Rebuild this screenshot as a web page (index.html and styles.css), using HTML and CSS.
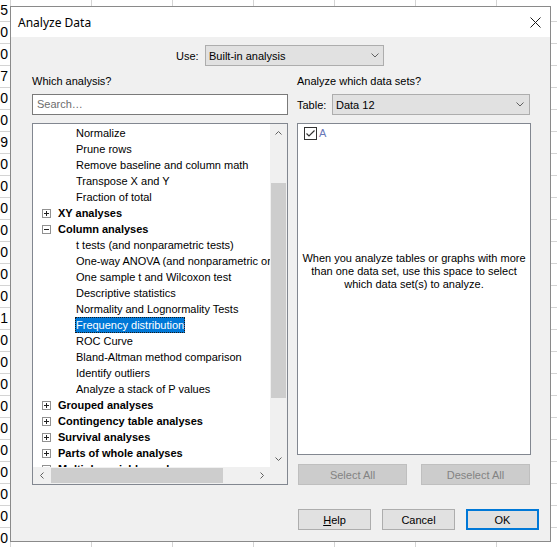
FILE: index.html
```html
<!DOCTYPE html>
<html lang="en">

<head>
    <meta charset="UTF-8">
    <title>Analyze Data</title>
    <link rel="stylesheet" href="styles.css">
</head>

<body>
    <div class="sheet">
        <div class="sheet-row"><div class="row-head">5</div><div class="row-cells"></div></div>
        <div class="sheet-row"><div class="row-head">0</div><div class="row-cells"></div></div>
        <div class="sheet-row"><div class="row-head">0</div><div class="row-cells"></div></div>
        <div class="sheet-row"><div class="row-head">7</div><div class="row-cells"></div></div>
        <div class="sheet-row"><div class="row-head">0</div><div class="row-cells"></div></div>
        <div class="sheet-row"><div class="row-head">0</div><div class="row-cells"></div></div>
        <div class="sheet-row"><div class="row-head">9</div><div class="row-cells"></div></div>
        <div class="sheet-row"><div class="row-head">0</div><div class="row-cells"></div></div>
        <div class="sheet-row"><div class="row-head">0</div><div class="row-cells"></div></div>
        <div class="sheet-row"><div class="row-head">0</div><div class="row-cells"></div></div>
        <div class="sheet-row"><div class="row-head">0</div><div class="row-cells"></div></div>
        <div class="sheet-row"><div class="row-head">0</div><div class="row-cells"></div></div>
        <div class="sheet-row"><div class="row-head">0</div><div class="row-cells"></div></div>
        <div class="sheet-row"><div class="row-head">0</div><div class="row-cells"></div></div>
        <div class="sheet-row"><div class="row-head">1</div><div class="row-cells"></div></div>
        <div class="sheet-row"><div class="row-head">0</div><div class="row-cells"></div></div>
        <div class="sheet-row"><div class="row-head">0</div><div class="row-cells"></div></div>
        <div class="sheet-row"><div class="row-head">0</div><div class="row-cells"></div></div>
        <div class="sheet-row"><div class="row-head">0</div><div class="row-cells"></div></div>
        <div class="sheet-row"><div class="row-head">0</div><div class="row-cells"></div></div>
        <div class="sheet-row"><div class="row-head">0</div><div class="row-cells"></div></div>
        <div class="sheet-row"><div class="row-head">0</div><div class="row-cells"></div></div>
        <div class="sheet-row"><div class="row-head">0</div><div class="row-cells"></div></div>
        <div class="sheet-row"><div class="row-head">0</div><div class="row-cells"></div></div>
        <div class="sheet-row"><div class="row-head">0</div><div class="row-cells"></div></div>
    </div>

    <div class="dialog">
        <div class="titlebar">
            <span class="title">Analyze Data</span>
            <svg class="close" width="11" height="11" viewBox="0 0 11 11">
                <path d="M0.5 0.5 L10.5 10.5 M10.5 0.5 L0.5 10.5" stroke="#1a1a1a" stroke-width="1" fill="none"/>
            </svg>
        </div>

        <div class="dialog-body">
            <div class="use-row">
                <span class="use-label">Use:</span>
                <div class="dropdown use-select">
                    <span>Built-in analysis</span>
                    <svg class="chevron" width="8" height="5" viewBox="0 0 8 5"><polyline points="0.5,0.5 4,4 7.5,0.5" fill="none" stroke="#606060"/></svg>
                </div>
            </div>

            <div class="columns">
                <div class="col-left">
                    <div class="label">Which analysis?</div>
                    <div class="search">Search…</div>
                    <div class="tree">
                        <div class="tree-rows">
                            <div class="node leaf"><span>Normalize</span></div>
                            <div class="node leaf"><span>Prune rows</span></div>
                            <div class="node leaf"><span>Remove baseline and column math</span></div>
                            <div class="node leaf"><span>Transpose X and Y</span></div>
                            <div class="node leaf"><span>Fraction of total</span></div>
                            <div class="node group"><i class="expander plus"></i>XY analyses</div>
                            <div class="node group"><i class="expander"></i>Column analyses</div>
                            <div class="node leaf"><span>t tests (and nonparametric tests)</span></div>
                            <div class="node leaf"><span>One-way ANOVA (and nonparametric or mixed)</span></div>
                            <div class="node leaf"><span>One sample t and Wilcoxon test</span></div>
                            <div class="node leaf"><span>Descriptive statistics</span></div>
                            <div class="node leaf"><span>Normality and Lognormality Tests</span></div>
                            <div class="node leaf"><span class="selected">Frequency distribution</span></div>
                            <div class="node leaf"><span>ROC Curve</span></div>
                            <div class="node leaf"><span>Bland-Altman method comparison</span></div>
                            <div class="node leaf"><span>Identify outliers</span></div>
                            <div class="node leaf"><span>Analyze a stack of P values</span></div>
                            <div class="node group"><i class="expander plus"></i>Grouped analyses</div>
                            <div class="node group"><i class="expander plus"></i>Contingency table analyses</div>
                            <div class="node group"><i class="expander plus"></i>Survival analyses</div>
                            <div class="node group"><i class="expander plus"></i>Parts of whole analyses</div>
                            <div class="node group"><i class="expander plus"></i>Multiple variable analyses</div>
                        </div>
                        <div class="vbar">
                            <div class="sb-btn">
                                <svg width="7" height="4" viewBox="0 0 7 4"><polyline points="0.5,3.5 3.5,0.5 6.5,3.5" fill="none" stroke="#606060"/></svg>
                            </div>
                            <div class="vtrack"><div class="vthumb"></div></div>
                            <div class="sb-btn">
                                <svg width="7" height="4" viewBox="0 0 7 4"><polyline points="0.5,0.5 3.5,3.5 6.5,0.5" fill="none" stroke="#606060"/></svg>
                            </div>
                        </div>
                        <div class="hbar">
                            <div class="sb-btn">
                                <svg width="4" height="7" viewBox="0 0 4 7"><polyline points="3.5,0.5 0.5,3.5 3.5,6.5" fill="none" stroke="#606060"/></svg>
                            </div>
                            <div class="htrack"><div class="hthumb"></div></div>
                            <div class="sb-btn">
                                <svg width="4" height="7" viewBox="0 0 4 7"><polyline points="0.5,0.5 3.5,3.5 0.5,6.5" fill="none" stroke="#606060"/></svg>
                            </div>
                        </div>
                        <div class="corner"></div>
                    </div>
                </div>

                <div class="col-right">
                    <div class="label">Analyze which data sets?</div>
                    <div class="table-row">
                        <span class="table-label">Table:</span>
                        <div class="dropdown table-select">
                            <span>Data 12</span>
                            <svg class="chevron" width="8" height="5" viewBox="0 0 8 5"><polyline points="0.5,0.5 4,4 7.5,0.5" fill="none" stroke="#606060"/></svg>
                        </div>
                    </div>
                    <div class="dataset-box">
                        <div class="dataset">
                            <span class="checkbox">
                                <svg width="11" height="11" viewBox="0 0 11 11"><polyline points="1.5,5.5 4,8 9.5,2.5" fill="none" stroke="#333" stroke-width="1.2"/></svg>
                            </span>
                            <span class="dataset-name">A</span>
                        </div>
                        <p class="hint">When you analyze tables or graphs with more than one data set, use this space to select which data set(s) to analyze.</p>
                    </div>
                    <div class="select-buttons">
                        <button class="btn" disabled>Select All</button>
                        <button class="btn" disabled>Deselect All</button>
                    </div>
                </div>
            </div>

            <div class="footer">
                <button class="btn"><u>H</u>elp</button>
                <button class="btn">Cancel</button>
                <button class="btn default">OK</button>
            </div>
        </div>
    </div>
</body>

</html>
```

FILE: styles.css
```css
body {
    margin: 0;
    background-color: #fff;
    font-family: "Liberation Sans", Arial, sans-serif;
    font-size: 11px;
    color: #000;
    position: relative;
    overflow: hidden;
    height: 547px;
}

/* spreadsheet behind the dialog */
.sheet-row {
    display: flex;
    height: 22px;
    box-sizing: border-box;
    border-bottom: 1px solid #d4d4d4;
}

.row-head {
    width: 11px;
    box-sizing: border-box;
    border-right: 1px solid #d4d4d4;
    padding-right: 2px;
    text-align: right;
    font-size: 14px;
    line-height: 21px;
    overflow: hidden;
}

.row-cells {
    flex: 1;
    background: repeating-linear-gradient(90deg, transparent 0 80px, #d4d4d4 80px 81px);
}

/* dialog window */
.dialog {
    position: absolute;
    left: 10px;
    top: 6px;
    width: 541px;
    height: 536px;
    box-sizing: border-box;
    border: 1px solid #8a8a8a;
    display: flex;
    flex-direction: column;
}

.titlebar {
    height: 30px;
    background-color: #fff;
    display: flex;
    align-items: center;
    padding-left: 7px;
}

.title {
    font-family: "Noto Sans", "Liberation Sans", sans-serif;
    font-size: 12px;
}

.close {
    margin-left: auto;
    margin-right: 9px;
}

.dialog-body {
    flex: 1;
    background-color: #f0f0f0;
    padding: 8px 11px 0 21px;
}

.use-row {
    display: flex;
    align-items: center;
}

.use-label {
    margin-left: 144px;
    width: 29px;
}

.dropdown {
    height: 21px;
    box-sizing: border-box;
    border: 1px solid #adadad;
    background-color: #e1e1e1;
    display: flex;
    align-items: center;
    padding-left: 3px;
}

.dropdown .chevron {
    margin-left: auto;
}

.use-select {
    width: 179px;
}

.use-select .chevron {
    margin-right: 4px;
}

.table-select {
    width: 198px;
}

.table-select .chevron {
    margin-right: 5px;
}

.columns {
    display: flex;
    gap: 9px;
    margin-top: 9px;
}

.col-left {
    width: 256px;
}

.col-right {
    width: 234px;
}

.label {
    line-height: 13px;
    margin-bottom: 6px;
}

.search {
    height: 21px;
    box-sizing: border-box;
    border: 1px solid #7a7a7a;
    background-color: #fff;
    color: #6d6d6d;
    padding-left: 4px;
    line-height: 19px;
}

/* tree view */
.tree {
    margin-top: 8px;
    height: 362px;
    box-sizing: border-box;
    border: 1px solid #828790;
    background-color: #fff;
    display: grid;
    grid-template-columns: 1fr 17px;
    grid-template-rows: 1fr 17px;
}

.tree-rows {
    overflow: hidden;
    padding-top: 1px;
}

.node {
    height: 16px;
    line-height: 16px;
    white-space: nowrap;
}

.leaf {
    padding-left: 42px;
}

.leaf span {
    display: inline-block;
    padding: 0 1px;
    height: 16px;
    box-sizing: border-box;
}

.leaf .selected {
    background-color: #0078d7;
    color: #fff;
    outline: 1px dotted #1a1a1a;
    outline-offset: -1px;
}

.group {
    padding-left: 9px;
    font-weight: bold;
    display: flex;
    align-items: center;
}

.expander {
    width: 9px;
    height: 9px;
    box-sizing: border-box;
    border: 1px solid #919191;
    margin-right: 7px;
    position: relative;
}

.expander::before {
    content: "";
    position: absolute;
    left: 1px;
    top: 3px;
    width: 5px;
    height: 1px;
    background-color: #222;
}

.expander.plus::after {
    content: "";
    position: absolute;
    left: 3px;
    top: 1px;
    width: 1px;
    height: 5px;
    background-color: #222;
}

/* scrollbars */
.vbar {
    background-color: #f0f0f0;
    display: flex;
    flex-direction: column;
}

.hbar {
    background-color: #f0f0f0;
    display: flex;
}

.corner {
    background-color: #f0f0f0;
}

.sb-btn {
    width: 17px;
    height: 17px;
    display: flex;
    align-items: center;
    justify-content: center;
}

.vtrack {
    flex: 1;
}

.vthumb {
    margin: 42px 1px 0;
    height: 215px;
    background-color: #cdcdcd;
}

.htrack {
    flex: 1;
}

.hthumb {
    margin: 1px 0 0 1px;
    width: 172px;
    height: 15px;
    background-color: #cdcdcd;
}

/* right column */
.table-row {
    display: flex;
    align-items: center;
}

.table-label {
    width: 35px;
}

.dataset-box {
    margin-top: 8px;
    height: 332px;
    box-sizing: border-box;
    border: 1px solid #828790;
    background-color: #fff;
    padding: 3px 6px 0;
}

.dataset {
    display: flex;
    align-items: flex-start;
}

.checkbox {
    width: 13px;
    height: 13px;
    box-sizing: border-box;
    border: 1px solid #333;
    display: flex;
}

.dataset-name {
    margin-left: 2px;
    color: #6a78b8;
    line-height: 12px;
}

.hint {
    margin: 112px -6px 0;
    text-align: center;
    line-height: 13px;
}

.select-buttons {
    display: flex;
    gap: 14px;
    margin-top: 9px;
    padding-left: 1px;
}

.btn {
    font-family: "Liberation Sans", Arial, sans-serif;
    font-size: 11px;
    color: #000;
    height: 21px;
    box-sizing: border-box;
    border: 1px solid #adadad;
    background-color: #e1e1e1;
    padding: 0;
}

.select-buttons .btn {
    width: 109px;
}

.btn:disabled {
    background-color: #cccccc;
    border-color: #bfbfbf;
    color: #838383;
}

.footer {
    display: flex;
    justify-content: flex-end;
    gap: 11px;
    margin-top: 24px;
}

.footer .btn {
    width: 73px;
}

.btn.default {
    border: 2px solid #0078d7;
}
```
